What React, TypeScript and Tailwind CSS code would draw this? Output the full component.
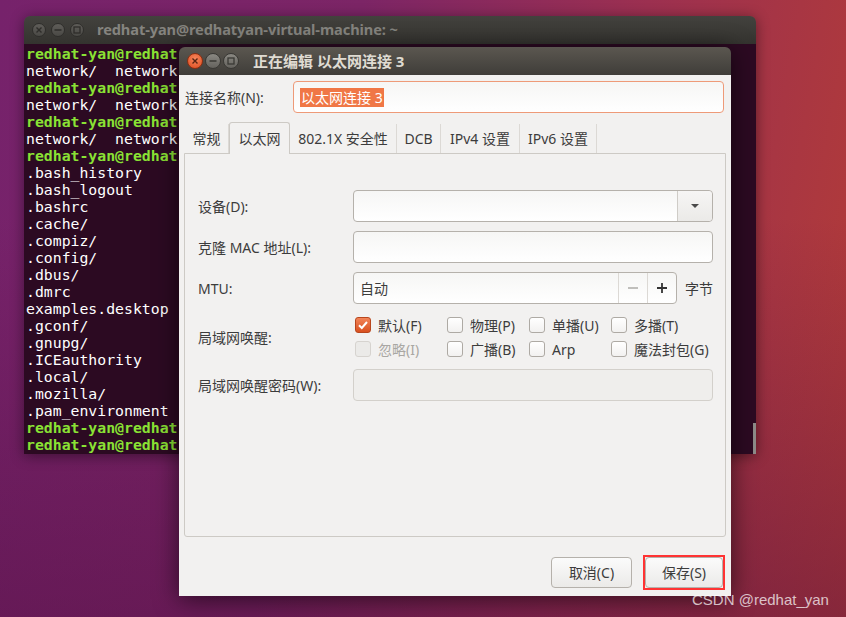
import React from 'react';

const ui = "font-['Noto_Sans','Noto_Sans_CJK_SC',sans-serif]";

// only what shows left of the dialog
const termLines: { p?: boolean; t: string }[] = [
  { p: true, t: 'redhat-yan@redhat' },
  { t: 'network/  network' },
  { p: true, t: 'redhat-yan@redhat' },
  { t: 'network/  network' },
  { p: true, t: 'redhat-yan@redhat' },
  { t: 'network/  network' },
  { p: true, t: 'redhat-yan@redhat' },
  { t: '.bash_history' },
  { t: '.bash_logout' },
  { t: '.bashrc' },
  { t: '.cache/' },
  { t: '.compiz/' },
  { t: '.config/' },
  { t: '.dbus/' },
  { t: '.dmrc' },
  { t: 'examples.desktop' },
  { t: '.gconf/' },
  { t: '.gnupg/' },
  { t: '.ICEauthority' },
  { t: '.local/' },
  { t: '.mozilla/' },
  { t: '.pam_environment' },
  { p: true, t: 'redhat-yan@redhat' },
  { p: true, t: 'redhat-yan@redhat' },
];

const WinButtons = ({ active }: { active: boolean }) => {
  const d = active ? 16 : 14;
  const gray = active
    ? 'bg-[linear-gradient(180deg,#8a8882,#64625d)] border-[#3a3935]'
    : 'bg-[linear-gradient(180deg,#5f5d59,#4a4945)] border-[#2f2e2b]';
  const glyph = active ? '#3a3935' : '#2e2d2a';
  return (
    <div className={`flex items-center ${active ? 'gap-[2px]' : 'gap-[5px]'}`}>
      <div
        className={`flex items-center justify-center rounded-full border ${
          active ? 'bg-[radial-gradient(circle_at_50%_35%,#f7875c,#dd4b1f)] border-[#8c2f12]' : gray
        }`}
        style={{ width: d, height: d }}
      >
        <svg width="8" height="8" viewBox="0 0 8 8">
          <path d="M1.5 1.5l5 5M6.5 1.5l-5 5" stroke={active ? '#5a2412' : glyph} strokeWidth="1.4" />
        </svg>
      </div>
      <div className={`flex items-center justify-center rounded-full border ${gray}`} style={{ width: d, height: d }}>
        <svg width="8" height="8" viewBox="0 0 8 8">
          <path d="M0.5 4h7" stroke={glyph} strokeWidth="1.4" />
        </svg>
      </div>
      <div className={`flex items-center justify-center rounded-full border ${gray}`} style={{ width: d, height: d }}>
        <svg width="8" height="8" viewBox="0 0 8 8">
          <rect x="1" y="1" width="6" height="6" fill="none" stroke={glyph} strokeWidth="1.3" />
        </svg>
      </div>
    </div>
  );
};

const Check = ({ label, checked, disabled }: { label: string; checked?: boolean; disabled?: boolean }) => (
  <div className="flex items-center gap-[7px] h-[24px]">
    <div
      className={`w-[16px] h-[16px] rounded-[3px] border flex items-center justify-center ${
        checked
          ? 'bg-[linear-gradient(180deg,#f28458,#d9501f)] border-[#b8461d]'
          : disabled
          ? 'bg-[#ebeae8] border-[#d6d3cf]'
          : 'bg-[linear-gradient(180deg,#ffffff,#f2f1f0)] border-[#aeaaa4]'
      }`}
    >
      {checked && (
        <svg width="12" height="12" viewBox="0 0 12 12">
          <path d="M2 6.3l2.8 2.7L10 3" fill="none" stroke="#fff" strokeWidth="2" />
        </svg>
      )}
    </div>
    <span className={`text-[14px] ${disabled ? 'text-[#a9a7a3]' : 'text-[#3c3c3c]'}`}>{label}</span>
  </div>
);

const inputCls =
  'h-[32px] rounded-[4px] border border-[#b5b1ab] bg-[linear-gradient(180deg,#f6f6f5,#ffffff)]';

const Row = ({ label, children }: { label: string; children: React.ReactNode }) => (
  <div className="flex items-center">
    <div className="w-[155px] text-[14px] text-[#3c3c3c]">{label}</div>
    {children}
  </div>
);

const tabs = [
  { t: '常规', w: 44 },
  { t: '以太网', w: 61, active: true },
  { t: '802.1X 安全性', w: 107 },
  { t: 'DCB', w: 44 },
  { t: 'IPv4 设置', w: 79 },
  { t: 'IPv6 设置', w: 77 },
];

export default function App() {
  return (
    <div className="relative w-[846px] h-[617px] overflow-hidden bg-[linear-gradient(180deg,rgba(80,14,64,0)_35%,rgba(80,14,64,0.45)_100%),linear-gradient(100deg,#76226b_0%,#7c2566_38%,#9c3050_68%,#b43c36_100%)]">
      {/* terminal window */}
      <div className="absolute left-[24px] top-[16px] w-[732px] h-[438px] flex flex-col shadow-[0_2px_14px_rgba(0,0,0,0.45)] rounded-t-[6px] overflow-hidden">
        <div className="h-[28px] flex items-center pl-[8px] gap-[13px] bg-[linear-gradient(180deg,#43423e,#34332f)]">
          <WinButtons active={false} />
          <span className="font-['Noto_Sans',sans-serif] font-bold text-[14.6px] text-[#85847f] tracking-[-0.1px]">
            redhat-yan@redhatyan-virtual-machine: ~
          </span>
        </div>
        <div className="relative flex-1 bg-[#2c0a22] pl-[2px] pt-[1px] font-['DejaVu_Sans_Mono',monospace] text-[14.8px] leading-[17px] whitespace-pre">
          {termLines.map((l, i) => (
            <div key={i} className={l.p ? 'text-[#8ae234] font-bold' : 'text-white'}>
              {l.t}
            </div>
          ))}
          <div className="absolute right-0 top-[379px] w-[3px] h-[31px] bg-[#8d8b89]" />
        </div>
      </div>

      {/* dialog */}
      <div className={`absolute left-[179px] top-[47px] w-[552px] h-[549px] flex flex-col shadow-[0_3px_24px_rgba(0,0,0,0.6)] rounded-t-[6px] overflow-hidden ${ui}`}>
        <div className="h-[28px] flex items-center pl-[8px] gap-[14px] bg-[linear-gradient(180deg,#5b5750,#3f3d39)]">
          <WinButtons active />
          <span className="font-bold text-[15px] text-[#dfdbd2]">正在编辑 以太网连接 3</span>
        </div>
        <div className="flex-1 bg-[#f2f1f0] flex flex-col">
          <div className="flex items-center pl-[6px] pt-[6px]">
            <div className="w-[108px] text-[14px] text-[#3c3c3c]">连接名称(N):</div>
            <div className="w-[431px] h-[32px] rounded-[4px] border border-[#ee9a78] bg-[linear-gradient(180deg,#f6f6f5,#ffffff)] flex items-center pl-[6px]">
              <span className="bg-[#f07746] text-white text-[14px] leading-[19px] px-[1px]">以太网连接 3</span>
            </div>
          </div>

          <div className="mt-[9px] mx-[5px] flex items-end h-[31px] pl-[1px]">
            {tabs.map((t) => (
              <div
                key={t.t}
                style={{ width: t.w }}
                className={`flex items-center justify-center text-[14px] text-[#3c3c3c] ${
                  t.active
                    ? 'h-[32px] -mb-px relative z-10 border border-b-0 border-[#cdcac5] rounded-t-[3px] bg-[#f2f1f0]'
                    : 'h-[29px] border-r border-[#dcd9d5]'
                }`}
              >
                {t.t}
              </div>
            ))}
          </div>

          <div className="mx-[5px] h-[384px] border border-[#cdcac5] rounded-b-[3px] pl-[13px] pt-[36px] flex flex-col gap-[9px]">
            <Row label="设备(D):">
              <div className={`${inputCls} w-[360px] flex justify-end`}>
                <div className="w-[35px] h-full border-l border-[#cfccc7] bg-[linear-gradient(180deg,#f6f5f4,#ebeae8)] rounded-r-[4px] flex items-center justify-center">
                  <svg width="10" height="6" viewBox="0 0 10 6">
                    <path d="M1 1h8L5 5z" fill="#4a4a4a" />
                  </svg>
                </div>
              </div>
            </Row>
            <Row label="克隆 MAC 地址(L):">
              <div className={`${inputCls} w-[360px]`} />
            </Row>
            <Row label="MTU:">
              <div className={`${inputCls} w-[324px] flex items-center`}>
                <span className="flex-1 pl-[6px] text-[14px] text-[#3c3c3c]">自动</span>
                <div className="w-[29px] h-full border-l border-[#dcd9d5] flex items-center justify-center">
                  <svg width="12" height="12" viewBox="0 0 12 12">
                    <path d="M1 6h10" stroke="#b2b0ac" strokeWidth="1.6" />
                  </svg>
                </div>
                <div className="w-[29px] h-full border-l border-[#dcd9d5] flex items-center justify-center">
                  <svg width="12" height="12" viewBox="0 0 12 12">
                    <path d="M1 6h10M6 1v10" stroke="#333" strokeWidth="1.8" />
                  </svg>
                </div>
              </div>
              <span className="ml-[8px] text-[14px] text-[#3c3c3c]">字节</span>
            </Row>
            <div className="flex items-center mb-[-1px]">
              <div className="w-[155px] text-[14px] text-[#3c3c3c]">局域网唤醒:</div>
              <div className="grid grid-cols-[92px_82px_82px_auto] pl-[2px]">
                <Check label="默认(F)" checked />
                <Check label="物理(P)" />
                <Check label="单播(U)" />
                <Check label="多播(T)" />
                <Check label="忽略(I)" disabled />
                <Check label="广播(B)" />
                <Check label="Arp" />
                <Check label="魔法封包(G)" />
              </div>
            </div>
            <Row label="局域网唤醒密码(W):">
              <div className="w-[360px] h-[32px] rounded-[4px] border border-[#d3d0cb] bg-[#efeeec]" />
            </Row>
          </div>

          <div className="mt-[20px] flex justify-end gap-[13px] pr-[8px]">
            <div className="w-[81px] h-[31px] rounded-[4px] border border-[#b5b1ab] bg-[linear-gradient(180deg,#fbfbfb,#ebeae8)] flex items-center justify-center text-[14px] text-[#3c3c3c]">
              取消(C)
            </div>
            <div className="relative w-[78px] h-[31px] rounded-[4px] border border-[#b5b1ab] bg-[linear-gradient(180deg,#fbfbfb,#ebeae8)] flex items-center justify-center text-[14px] text-[#3c3c3c]">
              保存(S)
              <div className="absolute -inset-[3px] border-2 border-[#ff3333]" />
            </div>
          </div>
        </div>
      </div>

      <div className="absolute left-[692px] top-[589px] font-['Liberation_Sans',sans-serif] text-[15px] text-[rgba(255,255,255,0.72)]">
        CSDN @redhat_yan
      </div>
    </div>
  );
}
